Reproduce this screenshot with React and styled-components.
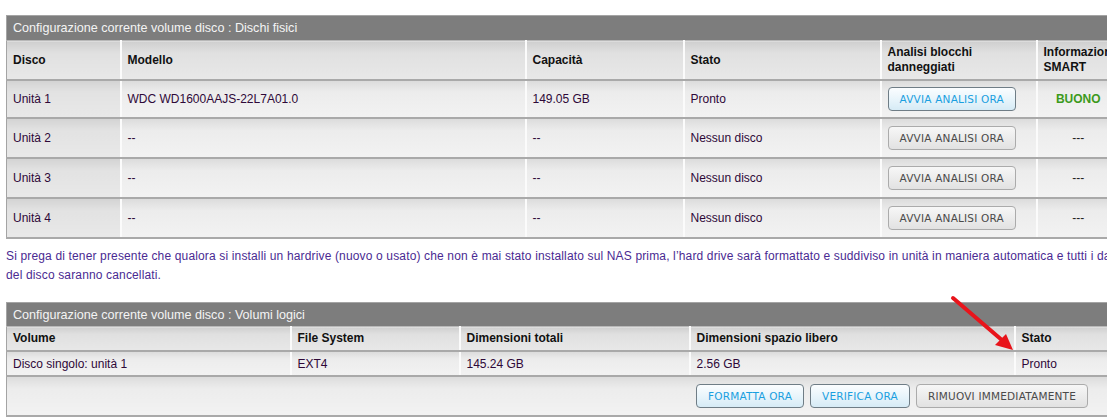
import React from 'react';
import styled, { createGlobalStyle } from 'styled-components';

const GlobalStyle = createGlobalStyle`
  html, body {
    margin: 0;
    padding: 0;
    background: #ffffff;
  }
  body {
    font-family: "Liberation Sans", Arial, sans-serif;
    font-size: 12px;
  }
`;

const Page = styled.div`
  position: relative;
  width: 1107px;
  height: 420px;
  overflow: hidden;
  padding: 15px 0 0 6px;
  box-sizing: border-box;
`;

const Table = styled.table`
  width: 1134px;
  table-layout: fixed;
  border-collapse: collapse;
  border: 1px solid #a4a4a4;
`;

const TitleCell = styled.th`
  background: #7d7d7d;
  color: #f4f4f4;
  font-weight: normal;
  font-size: 12.6px;
  text-align: left;
  height: ${p => p.$h}px;
  padding: 0 6px;
  border-bottom: 1px solid #b8b8b8;
`;

const HeadCell = styled.th`
  height: ${p => p.$h}px;
  padding: 0 6px;
  text-align: left;
  vertical-align: middle;
  font-weight: bold;
  color: #111;
  line-height: 15px;
  background: linear-gradient(to bottom, #cfcfcf 0%, #e0e0e0 30%, #e8e8e8 100%);
  border-left: 2px solid #fbfbfb;
  border-bottom: 2px solid #a9a9a9;
  &:first-child { border-left: none; }
`;

const Cell = styled.td`
  height: ${p => p.$h}px;
  padding: 0 6px;
  text-align: left;
  vertical-align: middle;
  color: #2e0838;
  background: ${p =>
    p.$dark
      ? 'linear-gradient(to bottom, #d3d3d3 0%, #e2e2e2 30%, #e8e8e8 100%)'
      : 'linear-gradient(to bottom, #dcdcdc 0%, #ececec 30%, #f2f2f2 100%)'};
  border-left: 2px solid #fbfbfb;
  border-bottom: 2px solid #a9a9a9;
  &:first-child { border-left: none; }
`;

const SmartCell = styled(Cell)`
  text-align: center;
  padding-right: 26px;
`;

const Good = styled.span`
  color: #3c9a1c;
  font-weight: bold;
`;

const Dash = styled.span`
  color: #222;
`;

const Button = styled.button`
  height: 24px;
  padding: 0 11px;
  border-radius: 4px;
  font-family: "DejaVu Sans", Tahoma, sans-serif;
  font-size: 10.5px;
  letter-spacing: 0.2px;
  cursor: pointer;
  border: 1px solid ${p => (p.$active ? '#6f7d86' : '#ababab')};
  color: ${p => (p.$active ? '#1a9fe0' : '#4a4a4a')};
  background: ${p =>
    p.$active
      ? 'linear-gradient(to bottom, #fbfdff 0%, #e9f5fb 50%, #d6ebf6 100%)'
      : 'linear-gradient(to bottom, #f7f7f7 0%, #ececec 50%, #e2e2e2 100%)'};
`;

const ActionCell = styled.td`
  height: 38px;
  padding: 0 51px 0 0;
  background: linear-gradient(to bottom, #dcdcdc 0%, #ececec 30%, #f2f2f2 100%);
  border-bottom: 2px solid #a9a9a9;
`;

const Actions = styled.div`
  display: flex;
  justify-content: flex-end;
  gap: 6px;
`;

const Note = styled.p`
  margin: 8px 0 17px 0;
  color: #4a2a92;
  line-height: 19px;
  letter-spacing: 0.15px;
  width: 1122px;
`;

const Arrow = styled.svg`
  position: absolute;
  left: 945px;
  top: 292px;
`;

const disks = [
  { name: 'Unità 1', model: 'WDC WD1600AAJS-22L7A01.0', cap: '149.05 GB', state: 'Pronto', active: true },
  { name: 'Unità 2', model: '--', cap: '--', state: 'Nessun disco' },
  { name: 'Unità 3', model: '--', cap: '--', state: 'Nessun disco' },
  { name: 'Unità 4', model: '--', cap: '--', state: 'Nessun disco' },
];

export default function App() {
  return (
    <Page>
      <GlobalStyle />
      <Table>
        <colgroup>
          <col style={{ width: 114 }} />
          <col style={{ width: 405 }} />
          <col style={{ width: 158 }} />
          <col style={{ width: 197 }} />
          <col style={{ width: 156 }} />
          <col />
        </colgroup>
        <thead>
          <tr>
            <TitleCell colSpan={6} $h={24}>Configurazione corrente volume disco : Dischi fisici</TitleCell>
          </tr>
          <tr>
            <HeadCell $h={38}>Disco</HeadCell>
            <HeadCell $h={38}>Modello</HeadCell>
            <HeadCell $h={38}>Capacità</HeadCell>
            <HeadCell $h={38}>Stato</HeadCell>
            <HeadCell $h={38}>Analisi blocchi<br />danneggiati</HeadCell>
            <HeadCell $h={38}>Informazioni<br />SMART</HeadCell>
          </tr>
        </thead>
        <tbody>
          {disks.map((d, i) => (
            <tr key={i}>
              <Cell $h={i === 0 ? 36 : 38} $dark>{d.name}</Cell>
              <Cell>{d.model}</Cell>
              <Cell>{d.cap}</Cell>
              <Cell>{d.state}</Cell>
              <Cell>
                <Button $active={d.active}>AVVIA ANALISI ORA</Button>
              </Cell>
              <SmartCell>
                {d.active ? <Good>BUONO</Good> : <Dash>---</Dash>}
              </SmartCell>
            </tr>
          ))}
        </tbody>
      </Table>

      <Note>
        Si prega di tener presente che qualora si installi un hardrive (nuovo o usato) che non è mai stato installato sul NAS prima, l’hard drive sarà formattato e suddiviso in unità in maniera automatica e tutti i dati del disco saranno cancellati.
      </Note>

      <Table>
        <colgroup>
          <col style={{ width: 284 }} />
          <col style={{ width: 169 }} />
          <col style={{ width: 230 }} />
          <col style={{ width: 325 }} />
          <col />
        </colgroup>
        <thead>
          <tr>
            <TitleCell colSpan={5} $h={23}>Configurazione corrente volume disco : Volumi logici</TitleCell>
          </tr>
          <tr>
            <HeadCell $h={23}>Volume</HeadCell>
            <HeadCell $h={23}>File System</HeadCell>
            <HeadCell $h={23}>Dimensioni totali</HeadCell>
            <HeadCell $h={23}>Dimensioni spazio libero</HeadCell>
            <HeadCell $h={23}>Stato</HeadCell>
          </tr>
        </thead>
        <tbody>
          <tr>
            <Cell $h={23}>Disco singolo: unità 1</Cell>
            <Cell>EXT4</Cell>
            <Cell>145.24 GB</Cell>
            <Cell>2.56 GB</Cell>
            <Cell>Pronto</Cell>
          </tr>
          <tr>
            <ActionCell colSpan={5}>
              <Actions>
                <Button $active>FORMATTA ORA</Button>
                <Button $active>VERIFICA ORA</Button>
                <Button>RIMUOVI IMMEDIATAMENTE</Button>
              </Actions>
            </ActionCell>
          </tr>
        </tbody>
      </Table>

      <Arrow width="80" height="70" viewBox="0 0 80 70">
        <line x1="8" y1="6" x2="58" y2="49" stroke="#e8141b" strokeWidth="4" strokeLinecap="round" />
        <polygon points="68,58 50,53 61,42" fill="#e8141b" />
      </Arrow>
    </Page>
  );
}
